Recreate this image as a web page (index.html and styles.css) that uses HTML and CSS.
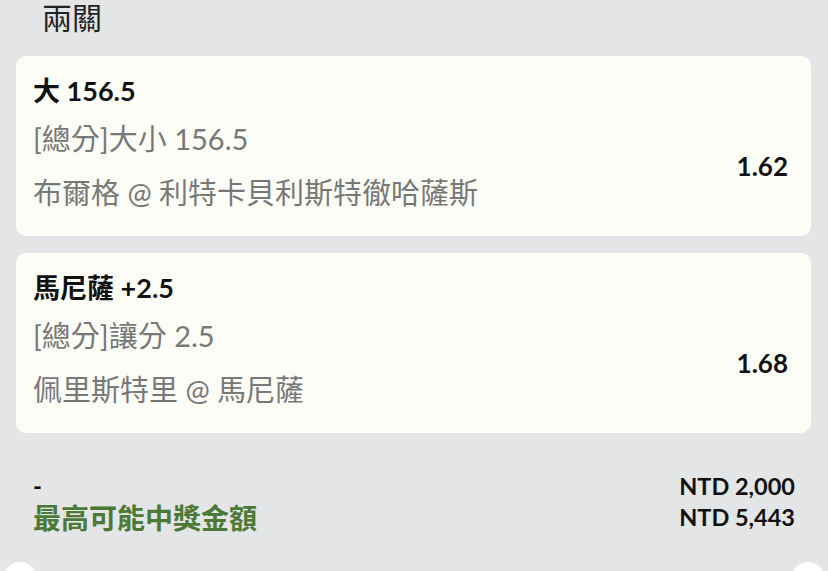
FILE: index.html
```html
<!DOCTYPE html>
<html lang="zh-Hant">
  <head>
    <meta charset="UTF-8" />
    <meta name="viewport" content="width=device-width, initial-scale=1.0" />
    <title>兩關</title>
    <link rel="stylesheet" href="styles.css">
  </head>
  <body>
    <div class="slip">
      <h2 class="slip-title">兩關</h2>

      <div class="bet">
        <div class="bet-name">大 156.5</div>
        <div class="bet-body">
          <div class="bet-info">
            <p>[總分]大小 156.5</p>
            <p>布爾格 @ 利特卡貝利斯特徹哈薩斯</p>
          </div>
          <div class="bet-odds">1.62</div>
        </div>
      </div>

      <div class="bet">
        <div class="bet-name">馬尼薩 +2.5</div>
        <div class="bet-body">
          <div class="bet-info">
            <p>[總分]讓分 2.5</p>
            <p>佩里斯特里 @ 馬尼薩</p>
          </div>
          <div class="bet-odds">1.68</div>
        </div>
      </div>

      <div class="summary">
        <div class="summary-row">
          <span class="stake-label">-</span>
          <span class="amount">NTD 2,000</span>
        </div>
        <div class="summary-row">
          <span class="win-label">最高可能中獎金額</span>
          <span class="amount">NTD 5,443</span>
        </div>
      </div>

      <div class="footer">
        <span class="dot"></span>
        <span class="dot"></span>
      </div>
    </div>
  </body>
</html>
```

FILE: styles.css
```css
* {
  margin: 0;
  padding: 0;
  box-sizing: border-box;
}
body {
  font-family: Lato, "Noto Sans CJK TC", sans-serif;
  background-color: #e4e5e7;
  color: #111;
  overflow: hidden;
}

.slip {
  padding: 0 17px 0 16px;
}

.slip-title {
  font-weight: normal;
  font-size: 30px;
  line-height: 36px;
  margin-top: -1px;
  padding-left: 26px;
  color: #222;
}

.bet {
  background-color: #fdfdf7;
  border-radius: 10px;
  padding: 17px 23px 25px 17px;
  margin-top: 21px;
}
.bet + .bet {
  margin-top: 17px;
}

.bet-name {
  font-size: 27px;
  font-weight: bold;
  line-height: 36px;
}

.bet-body {
  display: flex;
  align-items: center;
  justify-content: space-between;
  margin-top: 12px;
}

.bet-info {
  display: flex;
  flex-direction: column;
  gap: 18px;
  color: #787878;
  font-size: 29px;
  line-height: 36px;
}

.bet-odds {
  font-size: 26px;
  font-weight: bold;
}

.summary {
  margin-top: 37px;
  padding: 0 16px 0 17px;
}

.summary-row {
  display: flex;
  justify-content: space-between;
  align-items: center;
  height: 31px;
}

.stake-label {
  font-size: 24px;
  font-weight: bold;
}

.win-label {
  font-size: 28px;
  font-weight: bold;
  color: #4c7a36;
}

.amount {
  font-size: 23.5px;
  font-weight: bold;
}

.footer {
  display: flex;
  justify-content: space-between;
  margin: 30px -14px 0 -13px;
}

.dot {
  width: 34px;
  height: 34px;
  border-radius: 50%;
  background-color: #fff;
}
```
